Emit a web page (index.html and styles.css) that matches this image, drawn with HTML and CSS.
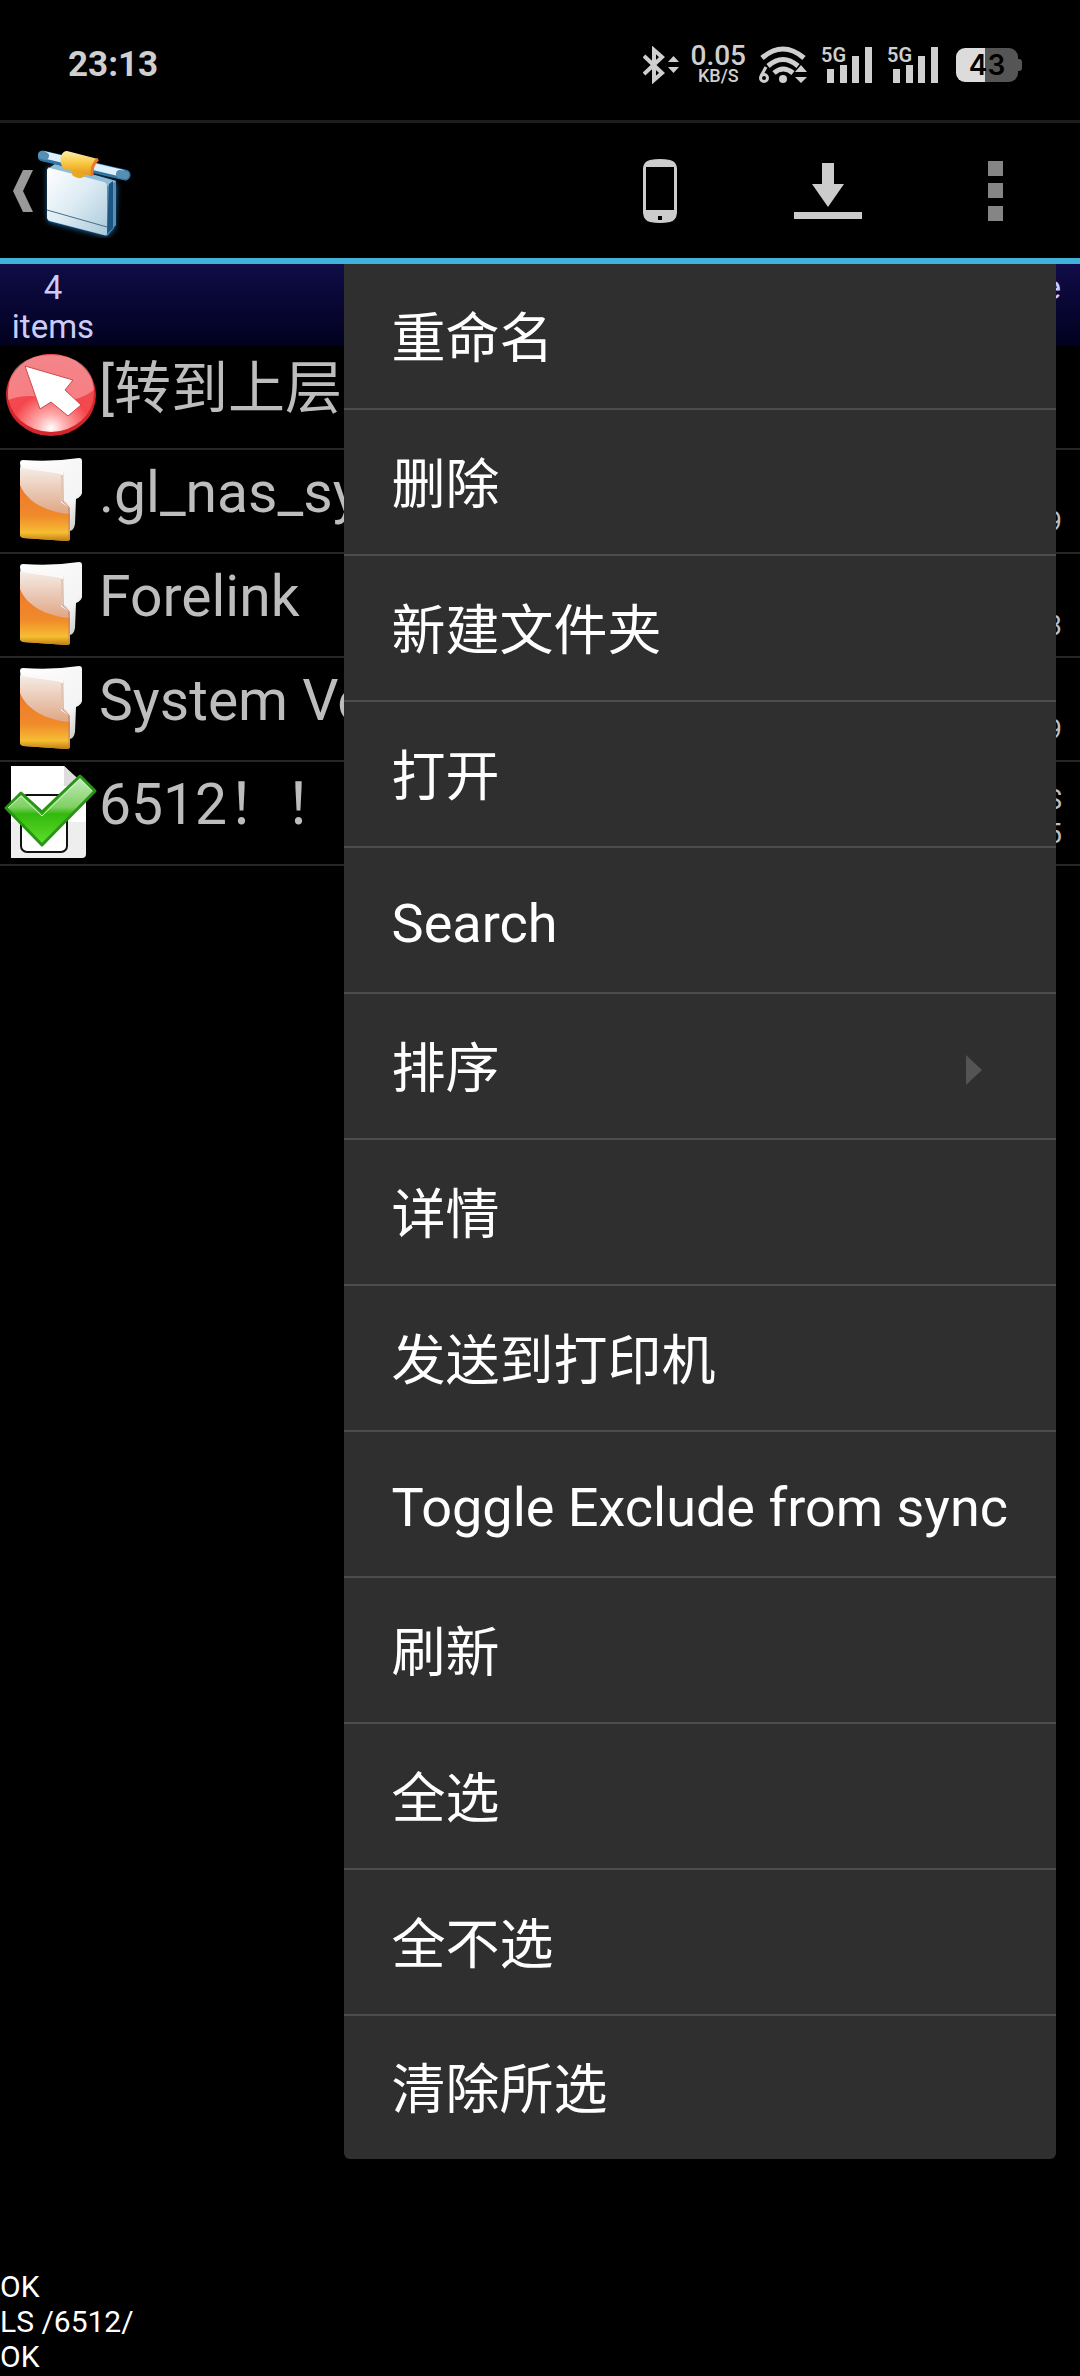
FILE: index.html
```html
<!DOCTYPE html>
<html lang="zh-CN">
<head>
<meta charset="utf-8">
<meta name="viewport" content="width=device-width, initial-scale=1">
<title>6512</title>
<link rel="stylesheet" href="styles.css">
</head>
<body>
<svg class="defs" aria-hidden="true">
  <defs>
    <linearGradient id="paper" x1="0" y1="0" x2="1" y2="1"><stop offset="0" stop-color="#fff"/><stop offset=".7" stop-color="#f4f4f4"/><stop offset="1" stop-color="#bbb"/></linearGradient>
    <linearGradient id="cover" x1="0" y1="0" x2="0" y2="1"><stop offset="0" stop-color="#f6eee9"/><stop offset=".6" stop-color="#e0ab8b"/></linearGradient>
    <linearGradient id="flame" x1="0" y1="0" x2="0" y2="1"><stop offset="0" stop-color="#ee7a2c"/><stop offset=".55" stop-color="#f08a2a"/><stop offset=".85" stop-color="#f6bd32"/><stop offset="1" stop-color="#c07d10"/></linearGradient>
    <radialGradient id="red" cx=".5" cy=".95" r=".9"><stop offset="0" stop-color="#fff"/><stop offset=".18" stop-color="#ffb0b0"/><stop offset=".5" stop-color="#f4474d"/><stop offset="1" stop-color="#ee5057"/></radialGradient>
    <linearGradient id="green" x1="0" y1="0" x2="0" y2="1"><stop offset="0" stop-color="#c9edc0"/><stop offset=".45" stop-color="#7fd063"/><stop offset=".55" stop-color="#33b80d"/><stop offset="1" stop-color="#5fe02c"/></linearGradient>
    <linearGradient id="ice" x1="0" y1="0" x2="1" y2="1"><stop offset="0" stop-color="#fff"/><stop offset=".5" stop-color="#dcebf3"/><stop offset="1" stop-color="#a9c9da"/></linearGradient>
    <linearGradient id="gold" x1="0" y1="0" x2="0" y2="1"><stop offset="0" stop-color="#fff0a8"/><stop offset=".5" stop-color="#f8c640"/><stop offset="1" stop-color="#e49312"/></linearGradient>
    <symbol id="folder" viewBox="0 0 64 84">
      <path d="M1 5Q1 2 4 2Q34 4 60 0Q63 0 63 3V35Q62 39 57 41L56 66Q55 72 51 73L10 76Z" fill="url(#paper)"/>
      <path d="M1 10Q1 8 4 8L43 14Q46 14 45 18V43L51 48V80Q51 83 48 83L4 80Q1 79 1 77Z" fill="url(#cover)"/>
      <path d="M1 27C8 44 27 54 51 56V80Q51 83 48 83L4 80Q1 79 1 77Z" fill="url(#flame)"/>
      <path d="M3 9L43 15V44L51 49" fill="none" stroke="#fff" stroke-width="2" opacity=".8"/>
      <path d="M43 17V43L50 49V80" fill="none" stroke="#b97d5c" stroke-width="1" opacity=".8"/>
    </symbol>
  </defs>
</svg>

<div class="status">
  <time class="clock">23:13</time>
  <div class="indicators">
    <svg class="bt" width="36" height="38" viewBox="0 0 36 38" fill="none" stroke="#cfcfcf" stroke-width="4"><path d="M1 10L19 27L11 34V4L19 11L1 28"/><path d="M25 16L30.500 10L36 16ZM25 21L30.500 27L36 21Z" fill="#cfcfcf" stroke="none"/></svg>
    <div class="rate"><b>0.05</b><span>KB/S</span></div>
    <svg class="wifi" width="48" height="38" viewBox="0 0 48 38" fill="none" stroke="#cfcfcf" stroke-width="5"><path d="M3 12Q24-6 45 12"/><path d="M9 20Q24 7 39 20"/><path d="M15 27Q24 19 34 27"/><circle cx="24" cy="33" r="4" fill="#cfcfcf" stroke="none"/><path d="M36 26L42 19L48 26ZM36 31L42 37L48 31Z" fill="#cfcfcf" stroke="none"/><path d="M7 21L2 30" stroke-width="3"/><circle cx="5" cy="32" r="3.500" stroke-width="3"/></svg>
    <div class="signal"><span>5G</span><svg width="46" height="36" viewBox="0 0 46 36" fill="#cfcfcf"><path d="M0 22h7v14H0zM13 18h7v18h-7zM25 9h7v27h-7zM38 0h7v36h-7z"/></svg></div>
    <div class="signal"><span>5G</span><svg width="46" height="36" viewBox="0 0 46 36" fill="#cfcfcf"><path d="M0 22h7v14H0zM13 18h7v18h-7zM25 9h7v27h-7zM38 0h7v36h-7z"/></svg></div>
    <div class="battery">43</div>
  </div>
</div>

<header class="appbar">
  <button class="up" aria-label="Back">
    <svg width="20" height="42" viewBox="0 0 20 42" fill="#999"><path d="M10 0H20L10 21L20 42H10L0 21Z"/></svg>
    <svg width="94" height="94" viewBox="0 -6 94 94">
      <path class="glow" d="M10 17L66 28L78 34L76 78L69 86L10 71Z" fill="#3b87c4"/>
      <path d="M10 19L17 14L78 31V75L69 85L60 80Z" fill="#5590b8"/>
      <path d="M10 19L17 14L78 31L71 36Z" fill="#8fbcd8"/>
      <path d="M71 34L75 31V78L69 84Z" fill="#1e5482"/>
      <path d="M9 20Q9 18 12 18L66 32Q69 33 69 36V83Q69 86 66 85L12 71Q9 70 9 68Z" fill="url(#ice)"/>
      <path d="M9 60L69 77" stroke="#466d86" stroke-width="1"/>
      <path d="M5 6L87 25" stroke="#2f76a5" stroke-width="11" stroke-linecap="round"/>
      <path d="M7 5L83 23" stroke="#dceffa" stroke-width="7" stroke-linecap="round"/>
      <path d="M4 5L7 6M82 24L87 25" stroke="#568fb4" stroke-width="8" stroke-linecap="round"/>
      <path d="M35 19H47V26Q41 31 34 25Z" fill="#e9a91e"/>
      <path d="M29 1L60 9Q53 15 54 26L26 19Q21 13 23 6Q25 1 29 1Z" fill="url(#gold)"/>
      <path d="M60 9Q53 15 54 26" fill="none" stroke="#e8792c" stroke-width="3"/>
    </svg>
  </button>
  <nav class="actions">
    <button aria-label="Device"><svg width="34" height="64" viewBox="0 0 34 64"><path fill="#ccc" fill-rule="evenodd" d="M7 1Q17-1 27 1Q33 2 34 9V54Q33 62 27 63Q17 65 7 63Q1 62 0 54V9Q1 2 7 1ZM3 8V51H31V8ZM15 57V61H19V57Z"/></svg></button>
    <button aria-label="Download"><svg width="68" height="58" viewBox="0 0 68 58" fill="#ccc"><path d="M28 1H40V22H50L34 45L18 22H28ZM0 50H68V57H0Z"/></svg></button>
    <button aria-label="More"><svg width="16" height="60" viewBox="0 0 16 60" fill="#858585"><path d="M0 0H15V15H0ZM0 22H15V37H0ZM0 45H15V60H0Z"/></svg></button>
  </nav>
</header>

<main class="browser">
  <div class="summary"><div class="count">4<br>items</div><div>e</div></div>
  <ul class="files">
    <li>
      <svg class="icon" width="99" height="102" viewBox="0 0 99 102"><ellipse cx="51" cy="49" rx="45" ry="41" fill="#d3252c"/><ellipse cx="51" cy="47" rx="43" ry="39" fill="url(#red)"/><path d="M8 44Q10 10 51 9Q92 10 94 44Q75 59 48 52Q25 47 8 54Z" fill="#fff" opacity=".3"/><path d="M25 20L73 34L65 44L81 59L68 70L51 56L40 63Z" fill="#fff" stroke="#cd4b4d" stroke-width="1"/></svg>
      <span class="name">[转到上层</span>
    </li>
    <li><svg class="icon" width="99" height="102" viewBox="0 0 99 102"><use href="#folder" x="19" y="8" width="64" height="84"/></svg><span class="name">.gl_nas_sy</span><span class="meta">9</span></li>
    <li><svg class="icon" width="99" height="102" viewBox="0 0 99 102"><use href="#folder" x="19" y="8" width="64" height="84"/></svg><span class="name">Forelink</span><span class="meta">3</span></li>
    <li><svg class="icon" width="99" height="102" viewBox="0 0 99 102"><use href="#folder" x="19" y="8" width="64" height="84"/></svg><span class="name">System Vo</span><span class="meta">9</span></li>
    <li>
      <svg class="icon" width="99" height="102" viewBox="0 0 99 102"><path d="M11 4H64L86 25V92Q86 96 82 96H11Z" fill="#eee"/><path d="M11 4H64L70 24L86 30V60H11Z" fill="#fff"/><path d="M64 4V24H86Z" fill="#ddd"/><rect x="21" y="33" width="46" height="57" rx="6" fill="#fff" stroke="#111" stroke-width="2"/><path d="M6 46L21 31L42 50L80 14L95 29L42 83Z" fill="url(#green)" stroke="#299417" stroke-width="3" stroke-linejoin="round"/><path d="M8 46L21 34L42 54L80 17L92 29" fill="none" stroke="#d6f5cc" stroke-width="1"/></svg>
      <span class="name">6512！！</span><span class="meta"><b>S</b>5</span>
    </li>
  </ul>
  <div class="menu" role="menu">
    <button role="menuitem">重命名</button>
    <button role="menuitem">删除</button>
    <button role="menuitem">新建文件夹</button>
    <button role="menuitem">打开</button>
    <button role="menuitem">Search</button>
    <button role="menuitem" class="sub">排序<svg width="16" height="30" viewBox="0 0 16 30" fill="#545454"><path d="M0 0L16 15L0 30Z"/></svg></button>
    <button role="menuitem">详情</button>
    <button role="menuitem">发送到打印机</button>
    <button role="menuitem">Toggle Exclude from sync</button>
    <button role="menuitem">刷新</button>
    <button role="menuitem">全选</button>
    <button role="menuitem">全不选</button>
    <button role="menuitem">清除所选</button>
  </div>
</main>

<footer class="log">OK<br>LS /6512/<br>OK</footer>
</body>
</html>
```
FILE: styles.css
```css
* { box-sizing: border-box; }
body {
  margin: 0;
  min-height: 100vh;
  display: flex;
  flex-direction: column;
  background: #000;
  color: #bdbdbd;
  font-family: Roboto, "Noto Sans CJK SC", sans-serif;
}
button {
  border: 0;
  padding: 0;
  background: none;
  color: inherit;
  font: inherit;
}
svg { display: block; flex: none; }
.defs { position: absolute; width: 0; height: 0; }

/* status bar */
.status {
  display: flex;
  justify-content: space-between;
  align-items: center;
  height: 120px;
  padding: 10px 62px 0 68px;
  color: #cfcfcf;
}
.clock { font-size: 35px; line-height: 40px; font-weight: 700; }
.indicators { display: flex; align-items: center; gap: 11px; }
.rate {
  display: flex;
  flex-direction: column;
  align-items: center;
  font-size: 18px;
  line-height: 18px;
  font-weight: 500;
}
.rate b { font-size: 28px; line-height: 22px; font-weight: 500; }
.wifi { margin-left: 2px; }
.signal { position: relative; padding-left: 6px; margin-left: 3px; }
.signal span {
  position: absolute;
  left: 0;
  top: -2px;
  font-size: 20px;
  line-height: 20px;
  font-weight: 600;
}
.battery {
  position: relative;
  width: 62px;
  height: 34px;
  margin-left: 6px;
  border-radius: 9px;
  background: linear-gradient(90deg, #dcdcdc 29px, #555 29px);
  color: #000;
  text-align: center;
  font: 600 28px/34px Inter, sans-serif;
}
.battery::after {
  content: "";
  position: absolute;
  left: 62px;
  top: 11px;
  width: 4px;
  height: 12px;
  border-radius: 0 3px 3px 0;
  background: #555;
}

/* action bar */
.appbar {
  display: flex;
  justify-content: space-between;
  align-items: center;
  height: 144px;
  border-top: 3px solid #1c1c1c;
  border-bottom: 6px solid #3fb2dc;
}
.up { display: flex; align-items: center; gap: 5px; padding-left: 13px; }
.glow { filter: drop-shadow(0 0 3px #2f7fc4); }
.actions { display: flex; }
.actions button {
  display: flex;
  justify-content: center;
  align-items: center;
  width: 168px;
  height: 135px;
}

/* file list */
.browser { position: relative; flex: 1; }
.summary {
  display: flex;
  justify-content: space-between;
  height: 82px;
  padding: 4px 19px 0 0;
  background: linear-gradient(#100c48, #01011f);
  color: #ccccfa;
  font-size: 33px;
  line-height: 39px;
}
.count { width: 106px; text-align: center; }
.files { margin: 0; padding: 0; list-style: none; }
.files li {
  display: flex;
  height: 104px;
  border-bottom: 2px solid #262626;
}
.name { font-size: 57px; line-height: 86px; white-space: nowrap; }
.meta {
  display: flex;
  flex-direction: column;
  justify-content: flex-end;
  margin-left: auto;
  padding: 0 18px 13px 0;
  text-align: right;
  font-size: 27px;
  line-height: 34px;
}
.meta b { font-weight: 400; }

/* overflow menu */
.menu {
  position: absolute;
  top: 0;
  right: 24px;
  display: flex;
  flex-direction: column;
  overflow: hidden;
  border-radius: 0 0 6px 6px;
  background: #2f2f2f;
  color: #fff;
  font-size: 54px;
  line-height: 64px;
}
.menu button {
  display: flex;
  justify-content: space-between;
  align-items: center;
  height: 146px;
  padding: 7px 48px 0;
  border-bottom: 2px solid #4c4c4c;
  text-align: left;
  white-space: nowrap;
}
.menu button:last-child { height: 143px; border-bottom: 0; }
.menu .sub { padding: 7px 74px 0 48px; }

.log {
  padding-bottom: 2px;
  color: #fff;
  font-size: 30px;
  line-height: 35px;
}
```
